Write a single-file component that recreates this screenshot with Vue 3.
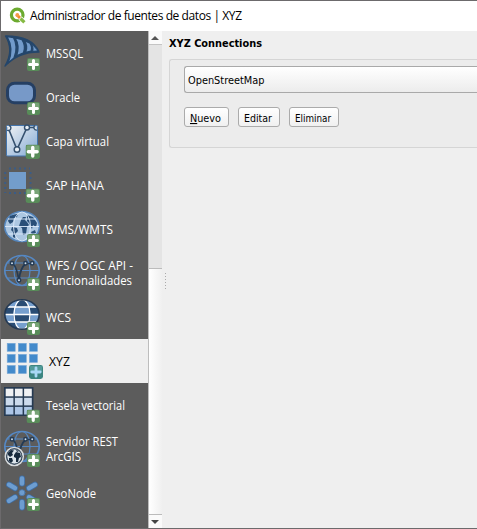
<script setup>
const sources = [
  { id: 'mssql', lines: ['MSSQL'], w: [37], badge: [27, 27, 13] },
  { id: 'oracle', lines: ['Oracle'], w: [34], badge: [27, 27, 13] },
  { id: 'virtual', lines: ['Capa virtual'], w: [63], badge: [25.5, 25.5, 14.5] },
  { id: 'hana', lines: ['SAP HANA'], w: [58], badge: [25.5, 25.5, 14.5] },
  { id: 'wms', lines: ['WMS/WMTS'], w: [67], badge: [27, 27, 13] },
  { id: 'wfs', lines: ['WFS / OGC API -', 'Funcionalidades'], w: [87, 86], badge: [27, 27, 13] },
  { id: 'wcs', lines: ['WCS'], w: [25], badge: [27, 27, 13] },
  { id: 'xyz', lines: ['XYZ'], w: [21], badge: [29, 26, 14], active: true },
  { id: 'vector', lines: ['Tesela vectorial'], w: [79], badge: [26.5, 26.5, 13.5] },
  { id: 'rest', lines: ['Servidor REST', 'ArcGIS'], w: [72, 35], badge: [27, 27, 13] },
  { id: 'geonode', lines: ['GeoNode'], w: [50], badge: [27, 27, 13] },
]
const cells = [0, 1, 2].flatMap(r => [0, 1, 2].map(c => ({ r, c })))
const dots = [0, 1, 2, 3, 4, 5]
const arms = 'M22 7.5V12.5 M22 31V36.5 M9 13.7L15 17.2 M35 13.7L29 17.2 M9 29.8L15 26.2 M35 29.8L29 26.2'
</script>

<template>
  <div class="window">
    <header class="titlebar">
      <svg class="logo" width="18" height="18" viewBox="0 0 18 18">
        <circle cx="8.2" cy="8" r="5.8" fill="none" stroke="#6caa2f" stroke-width="3.2" />
        <path d="M7.5 7.5 L11.5 11.5" stroke="#f08a2c" stroke-width="3" />
        <path d="M11 11 L15.2 15.2" stroke="#fff" stroke-width="4.8" />
        <path d="M11.5 11.5 L15.4 15.4" stroke="#86ba43" stroke-width="3.2" />
        <circle cx="8.3" cy="8" r="1.9" fill="#f39a47" />
      </svg>
      <svg class="txt" width="220" height="20"><text x="0" y="14" textLength="212" font-size="12">Administrador de fuentes de datos | XYZ</text></svg>
    </header>
    <div class="body">
      <nav class="sidebar">
        <div v-for="s in sources" :key="s.id" class="row" :class="{ active: s.active }">
          <svg class="icon" width="44" height="44" viewBox="1 0 44 44">
            <g v-if="s.id === 'mssql'" stroke="#24466b" stroke-width="1.4" stroke-linejoin="round">
              <path d="M5.5 5 C20 5 34 9 39 21 C29 21 16 23 5 35 C11 25 11 14 5.5 5Z" fill="#24466b" />
              <path d="M7 5.5 L13.5 6.5 C17 13 17 20 14 27 L8 32 C12 23 12 14 7 5.5Z" fill="#729bcb" />
              <path d="M15 6.8 L22 8.5 C25 13 25 18 23.5 22 L16.5 25 C19 18 19 13 15 6.8Z" fill="#729bcb" />
              <path d="M23.5 9 L30 12 C32 15 32 18 31 20.3 L25.5 21.5 C27.5 17 27 13 23.5 9Z" fill="#729bcb" />
              <path d="M31.5 13.3 C34.5 15.5 37 18 37.5 20 L32.6 20.3 C33.5 18 33 15.5 31.5 13.3Z" fill="#729bcb" stroke-width="1" />
            </g>
            <rect v-else-if="s.id === 'oracle'" x="7.5" y="8.2" width="27" height="19.6" rx="7" fill="#7799c8" stroke="#253f63" stroke-width="3" />
            <g v-else-if="s.id === 'virtual'">
              <rect x="6.5" y="6.5" width="31" height="30.5" rx="1" fill="url(#sheet)" stroke="#4475ad" />
              <path d="M8 8.5 L17 30.5 L27 8.5 L36 8.5" fill="none" stroke="#35516f" stroke-width="1.6" />
              <g fill="#e6eef5" stroke="#35516f" stroke-width="1.4">
                <circle cx="17" cy="30.5" r="2.8" /><circle cx="27" cy="8.5" r="2.5" />
                <path d="M7 11 A2.5 2.5 0 1 0 9 6.5 M37 11 A2.5 2.5 0 0 1 35 6.5" />
              </g>
            </g>
            <g v-else-if="s.id === 'hana'">
              <path d="M9 5.5H30 M9 30H26 M5.2 9V30 M30.5 9V26" fill="none" stroke="#3b5c86" stroke-width="2" stroke-dasharray="2 3" />
              <rect x="9" y="9" width="17" height="17" fill="#739dcb" />
            </g>
            <g v-else-if="s.id === 'wms'">
              <ellipse cx="22" cy="19.5" rx="17.3" ry="15" fill="#acc7e2" stroke="#5586bd" stroke-width="1.5" />
              <path d="M8 14 L10 9 L14 7.5 L18 7 L17 10 L14 11 L13 15 L10 17Z M12 20 L17 21 L18 24 L16 26 L15 31 L13 30 L13 25 L11 23Z M21 13 L23 10 L26 10 L25 13 L27 15 L29 18 L27 20 L26 27 L23 28 L22 21 L19 19Z M27 8 L33 10 L37 16 L36 20 L33 18 L32 22 L29 16 L27 14Z M31 25 L35 23 L36 26 L32 28Z" fill="#294f78" />
              <g fill="none" stroke="#dceafa" stroke-width=".9"><ellipse cx="22" cy="19.5" rx="8.5" ry="14.5" /><path d="M5 19.5H39 M8 12H36 M8 27H36" /></g>
            </g>
            <g v-else-if="s.id === 'wfs' || s.id === 'rest'" fill="none">
              <g stroke="#5588c4" stroke-width="1.7">
                <ellipse cx="22" cy="19.5" rx="17.2" ry="15" />
                <ellipse cx="22" cy="19.5" rx="8" ry="15" stroke-width="1.2" />
                <path d="M5 19.5H39 M8 12H36 M8 27H36" stroke-width="1.2" />
              </g>
              <path d="M12 12.5 Q16 13 19 29.5 Q20 17 26 12.5 L32 12.5" stroke="#243b55" stroke-width="1.7" />
              <g fill="#d2dfec" stroke="#243b55" stroke-width="1.5"><circle cx="12" cy="12.3" r="1.7" /><circle cx="25.5" cy="12.3" r="1.7" /><circle cx="32.2" cy="12.3" r="1.7" /><circle v-if="s.id === 'wfs'" cx="19" cy="29.3" r="1.7" /></g>
              <g v-if="s.id === 'rest'">
                <circle cx="14.3" cy="29.5" r="9" fill="#253445" stroke="#d8dcdf" stroke-width="1.5" />
                <circle cx="14.3" cy="29.5" r="7.4" fill="#dde5eb" stroke="#34475b" stroke-width=".7" />
                <path d="M8 26 L11 23 L14 23.5 L12 26 L13 28 L10 30 L8 28Z M9 31 L12 31 L13 34 L11 36 L9 34Z M14 28 L16 25 L20 26 L21 30 L19 31 L18 35 L16 35 L16 31 L14 30Z M16 23 L19 24 L17 25Z" fill="#182b3e" />
              </g>
            </g>
            <g v-else-if="s.id === 'wcs'">
              <clipPath id="globe"><ellipse cx="22" cy="19.5" rx="17" ry="14.8" /></clipPath>
              <g clip-path="url(#globe)">
                <path d="M4 4H40V36H4Z" fill="#294c74" />
                <path d="M4 4H22Q18 5 15 12H4Z M22 4H40V12H29Q26 5 22 4Z M15 12H29Q31 16 30.5 19.5H13.5Q13 16 15 12Z M4 19.5H13.5Q13 24 15 27H4Z M30.5 19.5H40V27H29Q31 24 30.5 19.5Z M15 27H29Q26 34 22 35Q18 34 15 27Z" fill="#769fce" />
                <g fill="none" stroke="#fff" stroke-width="1.3"><ellipse cx="22" cy="19.5" rx="8" ry="15" /><path d="M5 19.5H39 M5 12H39 M5 27H39" /></g>
              </g>
              <ellipse cx="22" cy="19.5" rx="17.2" ry="14.8" fill="none" stroke="#243953" stroke-width="1.6" />
            </g>
            <g v-else-if="s.id === 'xyz'">
              <rect v-for="k in cells.slice(0, 8)" :key="k.r * 3 + k.c" :x="7.2 + k.c * 11.1" :y="4.3 + k.r * 11.1" width="8" height="8" fill="#438acb" stroke="#78a8d8" stroke-width=".6" />
            </g>
            <g v-else-if="s.id === 'vector'">
              <rect x="4" y="4" width="29.5" height="29" fill="#263a52" />
              <rect v-for="k in cells" :key="k.r * 3 + k.c" :x="5.7 + k.c * 9.2" :y="5.7 + k.r * 9.1" width="7.7" height="7.6" :class="'tile' + k.r" />
            </g>
            <g v-else stroke-linecap="round">
              <path :d="arms" stroke="#3f6ea4" stroke-width="6" />
              <path :d="arms" stroke="#6d9dd0" stroke-width="4.4" />
              <circle cx="22" cy="21.7" r="3" fill="#6d9dd0" stroke="#4878ae" stroke-width=".8" />
            </g>
            <svg :x="s.badge[0]" :y="s.badge[1]" :width="s.badge[2]" :height="s.badge[2]" viewBox="0 0 14 14">
              <rect x="0" y="0" width="14" height="14" rx="2.4" :fill="s.active ? '#3c8581' : '#588c59'" />
              <path d="M1 2Q1 1 2 1H12Q13 1 13 2V7Q7 5 1 8Z" :fill="s.active ? '#529b9a' : '#78a477'" />
              <path d="M7 2.8V11.2 M2.8 7H11.2" :stroke="s.active ? '#a9d8f5' : '#fff'" :stroke-width="s.active ? 2.8 : 3.3" stroke-linecap="round" />
            </svg>
          </svg>
          <div class="label">
            <svg v-for="(line, i) in s.lines" :key="i" class="txt" width="98" height="15"><text x="0" y="12" :textLength="s.w[i]" lengthAdjust="spacingAndGlyphs" font-size="12">{{ line }}</text></svg>
          </div>
        </div>
      </nav>
      <div class="scrollbar">
        <div class="arrow"><svg width="8" height="4"><path d="M0 4L4 0L8 4Z" fill="#555" /></svg></div>
        <div class="thumb"></div>
        <div class="track"></div>
        <div class="arrow down"><svg width="8" height="4"><path d="M0 0L4 4L8 0Z" fill="#444" /></svg></div>
      </div>
      <div class="splitter"><i v-for="d in dots" :key="d"></i></div>
      <main class="content">
        <svg class="txt ui heading" width="110" height="16"><text x="0" y="12" textLength="93" lengthAdjust="spacingAndGlyphs" font-size="11" font-weight="bold">XYZ Connections</text></svg>
        <section class="group">
          <div class="combo"><svg class="txt ui" width="100" height="16"><text x="0" y="12" textLength="76.5" lengthAdjust="spacingAndGlyphs" font-size="11">OpenStreetMap</text></svg></div>
          <div class="buttons">
            <button class="nuevo"><svg class="txt ui" width="32" height="16"><text x="0" y="12" textLength="31" lengthAdjust="spacingAndGlyphs" font-size="11"><tspan text-decoration="underline">N</tspan>uevo</text></svg></button>
            <button class="editar"><svg class="txt ui" width="29" height="16"><text x="0" y="12" textLength="28" lengthAdjust="spacingAndGlyphs" font-size="11">Editar</text></svg></button>
            <button class="eliminar"><svg class="txt ui" width="37" height="16"><text x="0" y="12" textLength="36" lengthAdjust="spacingAndGlyphs" font-size="11">Eliminar</text></svg></button>
          </div>
        </section>
      </main>
    </div>
    <svg class="defs" width="0" height="0"><linearGradient id="sheet" x1="0" y1="0" x2="1" y2="1"><stop stop-color="#f2f3f4" /><stop offset="1" stop-color="#82a9d5" /></linearGradient></svg>
  </div>
</template>

<style>
body { margin: 0; overflow: hidden; }
</style>
<style scoped>
.window { box-sizing: border-box; width: 477px; height: 529px; overflow: hidden; border: solid #6c6a6c; border-width: 1px 0 1px 1px; background: #efefef; font-family: "Open Sans", "Noto Sans", sans-serif; }
.txt { display: block; overflow: visible; fill: currentColor; }
.ui { font-family: "DejaVu Sans", sans-serif; }
.titlebar { display: flex; height: 30px; box-sizing: border-box; padding: 5px 0 0 8px; background: #fff; color: #000; }
.logo { margin-top: 1px; margin-right: 3px; }
.body { display: flex; height: 497px; }
.sidebar { width: 147px; background: #5c5c5c; color: #fff; }
.row { display: flex; height: 44px; }
.icon { flex: none; }
.label { display: flex; flex-direction: column; justify-content: center; padding-left: 1px; }
.active { background: #efefef; color: #000; }
.active .label { padding-left: 4px; }
.tile0 { fill: #f0f1f3; }
.tile1 { fill: #ccdaec; }
.tile2 { fill: #acc5e6; }
.scrollbar { display: flex; flex-direction: column; width: 14px; box-sizing: border-box; border-left: 1px solid #bdbdbd; }
.arrow { display: flex; box-sizing: border-box; height: 14px; padding-right: 1px; align-items: center; justify-content: center; background: #fafafa; border-bottom: 1px solid #c4c4c4; }
.thumb { height: 223px; background: #e4e4e4; border-bottom: 1px solid #bbb; }
.track { flex: 1; background: linear-gradient(90deg, #fff, #f0f0f0); }
.arrow.down { border-top: 1px solid #bbb; border-bottom: 0; height: 14px; }
.splitter { display: flex; flex-direction: column; gap: 2px; width: 7px; box-sizing: border-box; padding: 242px 0 0 3px; }
.splitter i { width: 1px; height: 1px; background: #aaa; }
.content { flex: 1; }
.heading { margin-top: 4px; }
.group { box-sizing: border-box; height: 89px; margin-top: 8px; border: 1px solid #d5d5d5; border-right: 0; border-radius: 3px 0 0 3px; background: #ececec; padding: 6px 0 0 14px; }
.combo { display: flex; align-items: center; box-sizing: border-box; height: 27px; border: 1px solid #a9a9a9; border-right: 0; border-radius: 3px 0 0 3px; padding-left: 3px; background: linear-gradient(#fff, #ececec); }
.buttons { display: flex; gap: 9px; margin-top: 14px; }
button { display: flex; align-items: center; justify-content: center; box-sizing: border-box; height: 20px; margin: 0; padding: 2px 1px 0 0; border: 1px solid #ababab; border-radius: 3px; background: linear-gradient(#fff, #f0f0f0); color: #000; }
.nuevo { width: 45px; }
.editar { width: 42px; }
.eliminar { width: 50px; }
.defs { display: block; }
</style>
